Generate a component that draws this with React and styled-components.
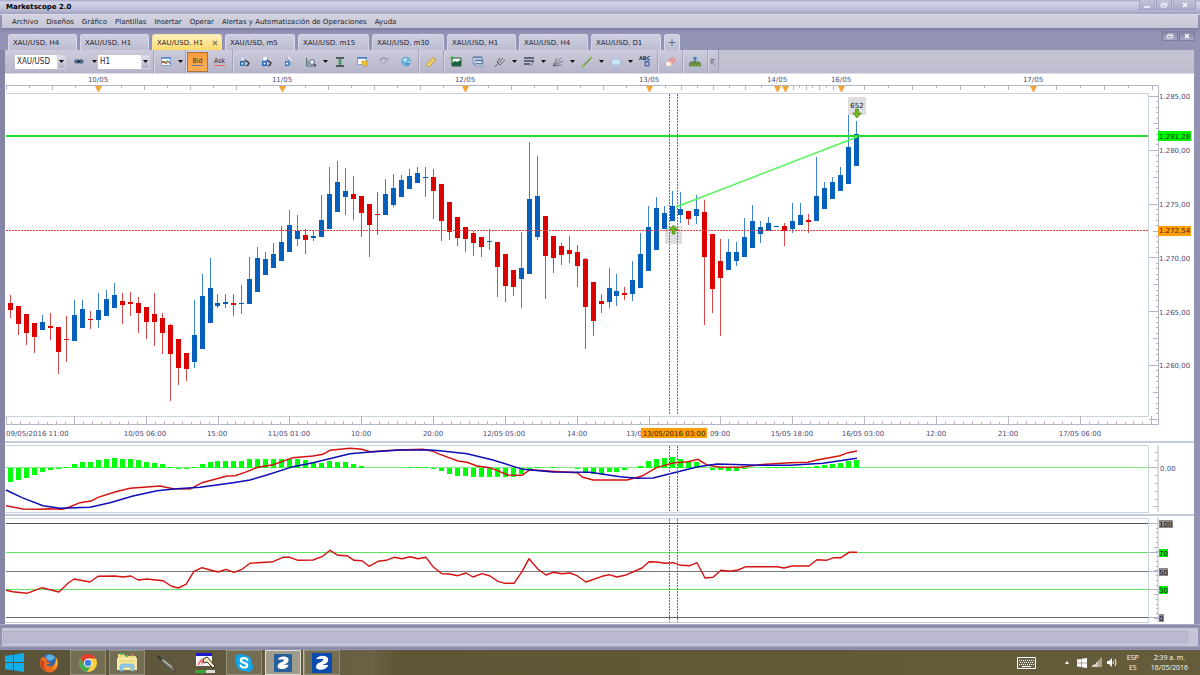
import React from 'react';
import styled, { createGlobalStyle, css } from 'styled-components';

const GlobalStyle = createGlobalStyle`
  * {
    box-sizing: border-box;
  }
  body {
    margin: 0;
    background: #5f573a;
    font-family: "DejaVu Sans", Verdana, sans-serif;
    font-size: 7px;
    color: #22222e;
  }
  button, select {
    font: inherit;
    color: inherit;
    margin: 0;
    padding: 0;
    border: 0;
    background: none;
  }
  svg {
    display: block;
  }
`;

/* ---------- window ---------- */

const Window = styled.div`
  background: #9293b3;
`;

const TitleBar = styled.header`
  display: flex;
  justify-content: space-between;
  align-items: flex-start;
  height: 15px;
  padding: 0 4px 0 6px;
  background: linear-gradient(#a3a5c6, #d2d4e8 2px, #c3c5dc 8px, #a4a5c4 13px);
  border-bottom: 1px solid #d9daea;
  h1 {
    margin: 0;
    font-size: 7px;
    line-height: 15px;
    font-weight: bold;
    color: #000;
  }
`;

const WindowButtons = styled.div`
  display: flex;
  gap: 1px;
`;

const WindowButton = styled.button`
  display: flex;
  align-items: center;
  justify-content: center;
  width: ${props => props.$wide ? 23 : 16}px;
  height: 10px;
  background: ${props => props.$dark ? 'linear-gradient(#7f80a2, #a8a9c4)' : 'linear-gradient(#c2c3da, #adaecb)'};
  border: 1px solid ${props => props.$dark ? '#7d7e9e' : '#a3a4c1'};
  border-top: 0;
`;

const MenuBar = styled.nav`
  display: flex;
  gap: 8px;
  height: 14px;
  margin: 0 2px;
  padding-left: 10px;
  background: linear-gradient(#d2d2e0, #c5c5d6);
  border-bottom: 1px solid #7f80a2;
  button {
    line-height: 14px;
    white-space: nowrap;
  }
`;

const TabStrip = styled.div`
  display: flex;
  align-items: flex-end;
  gap: 3px;
  height: 21px;
  padding: 0 5px 0 8px;
  background: linear-gradient(#8485a7, #9394b5 4px);
`;

const Tab = styled.button`
  display: flex;
  align-items: center;
  justify-content: space-between;
  width: ${props => props.$width || 69}px;
  height: 16px;
  padding: 0 3px 0 4px;
  border: 1px solid #d8d8e8;
  border-bottom: 0;
  border-radius: 3px 3px 0 0;
  background: linear-gradient(#cfcfe0, #bdbdd2);
  white-space: nowrap;
  ${props => props.$active && css`
    background: linear-gradient(#fff3c0, #ffd968);
    border-color: #f3e3a8;
  `}
`;

const AddTab = styled(Tab)`
  width: 16px;
  padding: 0;
  justify-content: center;
  color: #66667c;
  font-size: 10px;
`;

const ChildButtons = styled(WindowButtons)`
  margin-left: auto;
  align-self: flex-start;
  padding-top: 2px;
`;

/* ---------- toolbar ---------- */

const Workspace = styled.main`
  margin: 0 6px 0 0;
  border-left: 5px solid #8586a6;
  background: #fff;
`;

const Toolbar = styled.div`
  display: flex;
  align-items: center;
  height: 24px;
  border-bottom: 1px solid #dcdce8;
  background: linear-gradient(#c4c3d4, #bfbed0);
`;

const ToolGroup = styled.div`
  display: flex;
  align-items: center;
  height: 23px;
  padding: 0 2px 0 10px;
  background: linear-gradient(#cdccdc, #b5b4c9);
  border-right: 1px solid #a09fb5;
`;

const Combo = styled.label`
  display: flex;
  width: ${props => props.$width}px;
  height: 14px;
  background: #fff;
  margin-right: 2px;
  select {
    flex: 1;
    min-width: 0;
    appearance: none;
    padding-left: 2px;
    font-family: "DejaVu Sans Condensed", "DejaVu Sans", sans-serif;
    font-size: 8px;
    line-height: 14px;
    outline: none;
  }
`;

const ComboArrow = styled.span`
  display: flex;
  align-items: center;
  justify-content: center;
  width: 9px;
  background: linear-gradient(#e2e2ec, #aeaec2);
  border: 1px solid #d5d5e0;
`;

const ToolButton = styled.button`
  display: flex;
  align-items: center;
  justify-content: center;
  width: 22px;
  height: 20px;
  flex: none;
`;

const CaretButton = styled(ToolButton)`
  width: ${props => props.$wide ? 8 : 7}px;
`;

const PriceButton = styled(ToolButton)`
  flex-direction: column;
  width: ${props => props.$active ? 21 : 23}px;
  font-family: "DejaVu Sans Condensed", "DejaVu Sans", sans-serif;
  font-size: 7px;
  line-height: 8px;
  color: #3c2c38;
  span {
    border-bottom: 1px solid ${props => props.$active ? '#5f7fa8' : '#e06a62'};
  }
  ${props => props.$active && css`
    background: linear-gradient(#f79a3c, #ffae52);
    border: 1px solid #b0713c;
  `}
`;

const Separator = styled.i`
  width: 1px;
  height: 23px;
  margin: 0 1px;
  background: #a6a5bb;
  box-shadow: 1px 0 #d4d3e2;
`;

/* ---------- panels ---------- */

const Chart = styled.svg`
  width: 100%;
  font-family: "DejaVu Sans", Verdana, sans-serif;
  font-size: 7px;
`;

const Splitter = styled.div`
  height: 2px;
  background: #c2cddb;
`;

const WindowFoot = styled.div`
  height: 4px;
  background: linear-gradient(#b6b7cd, #8182a3 2px, #9a9bbb);
`;

const StatusBar = styled.footer`
  height: 18px;
  margin: 0 2px;
  padding: 3px 10px 3px 1px;
  background: #c6c5d8;
  div {
    height: 12px;
    background: #bbb9cf;
    border: 1px solid #b1b0c8;
  }
`;

/* ---------- taskbar ---------- */

const Taskbar = styled.div`
  display: flex;
  align-items: center;
  gap: 3px;
  height: 25px;
  background: linear-gradient(90deg, #5a5236, #625a3f 20%, #6b6144 31%, #5e5636 33%, #615838 60%, #645c3b);
`;

const TaskButton = styled.button`
  display: flex;
  align-items: center;
  justify-content: center;
  width: ${props => props.$start ? 28 : 36}px;
  height: 25px;
  flex: none;
  ${props => props.$open && css`
    background: #736d53;
    border: 1px solid #928d75;
  `}
  ${props => props.$active && css`
    background: #a09c8c;
    border: 1px solid #dedcd2;
    box-shadow: 2px 0 #5f583c, 3px 0 #c1bdab;
  `}
`;

const Tray = styled.div`
  display: flex;
  align-items: center;
  margin-left: auto;
  padding-right: 12px;
  color: #fff;
  font-family: "Open Sans", "Noto Sans", sans-serif;
  font-size: 7px;
  line-height: 10px;
  text-align: center;
`;

const TrayButton = styled.button`
  display: flex;
  justify-content: center;
  width: ${props => props.$gap ? 19 : 15}px;
  margin-right: ${props => props.$gap || 0}px;
`;

const Language = styled.div`
  width: 26px;
  margin-right: 5px;
`;

/* ---------- icons ---------- */

const Caret = () => (
  <svg width="5" height="3" viewBox="0 0 5 3"><path d="M0 0h5L2.5 3z" fill="#111" /></svg>
);

const icons = {
  link: <g fill="#7b9cbd" stroke="#2c4a6c" strokeWidth="1.2"><rect x="3" y="5" width="4" height="3" rx="1.5" /><rect x="7" y="5" width="4" height="3" rx="1.5" /><path d="M5 6.500h4" stroke="#1c3049" /></g>,
  chart: <g><path d="M2.500 2.500h9v8h-9z" fill="#fff" stroke="#7ea3d0" /><path d="M2 3h10" stroke="#4c83c9" strokeWidth="1.500" /><path d="M3 8l2-2 2 3 2-3 2 3" fill="none" stroke="#d43a3a" /><path d="M3 6l2 2 3-2 3 1" fill="none" stroke="#3d8b4c" /></g>,
  zoomIn: <g><circle cx="4.500" cy="3.500" r="1.700" fill="#dbe7f2" stroke="#a5b5c8" strokeWidth=".5" /><path d="M2 6h5v5H2z" fill="#3b6ea8" /><path d="M3.500 7.500h2v2h-2z" fill="#cfe0f2" /><path d="M7 5l4 3-1 2-2 1" fill="none" stroke="#30303c" strokeWidth="1.300" /></g>,
  zoomOut: <g><circle cx="5" cy="3.500" r="2.200" fill="#f4f8fc" stroke="#a5b5c8" strokeWidth=".5" /><path d="M2 6h5v5H2z" fill="#2468b2" /><path d="M3.500 7.500h2v2h-2z" fill="#e7f1fb" /><path d="M7 5l4 3-1 2-2 1" fill="none" stroke="#30303c" strokeWidth="1.300" /></g>,
  pointer: <g><path d="M3 6h4v5H3z" fill="#377bbb" /><path d="M4 7.500h2v2H4z" fill="#e7f1fb" /><path d="M5 3l2 3M10 4L8 9M8 3v8" stroke="#8195ad" /><path d="M6 2l4 4" stroke="#f1f5fb" strokeWidth="1.500" /></g>,
  zoomArea: <g fill="none"><path d="M2.500 3v8H12" stroke="#54776c" /><path d="M2 9h3M4 5v5" stroke="#6d8f84" /><circle cx="8" cy="7" r="2.500" fill="#dce9f0" stroke="#676d80" /><path d="M10 9l2 2" stroke="#444" strokeWidth="1.500" /></g>,
  fit: <g><path d="M3 3h8M3 11h8" stroke="#2c3833" strokeWidth="1.300" /><path d="M7 4v6" stroke="#3b7a4f" strokeWidth="1.500" /><path d="M4.500 6.500L7 4l2.500 2.500zM4.500 8h5L7 10z" fill="#4f9a66" /></g>,
  note: <g><path d="M2.500 2.500h9v7h-9z" fill="#fff" stroke="#7ea3d0" /><path d="M2 3h10" stroke="#3f78bd" strokeWidth="1.500" /><path d="M7 6h5v5H9L7 9z" fill="#f5ca35" stroke="#ba8322" strokeWidth=".6" /></g>,
  refresh: <g fill="none"><path d="M3 6c1-4 6-4 7-1" stroke="#8d92a4" strokeWidth="1.300" /><path d="M11 2v4H7M9 7c-1 3-4 3-5 0" stroke="#a4a8b8" /></g>,
  globe: <g><circle cx="7" cy="6.500" r="4.500" fill="#67b3e0" stroke="#6c9dc2" strokeWidth=".6" /><path d="M4 5l3-2 1 2-2 2zM8 8l3-2-1 3z" fill="#c9ecfb" /><path d="M7 8h4l-2 3z" fill="#3b89bb" /></g>,
  ruler: <g><path d="M2 9.500L9 2l3 3-7 7z" fill="#f4d976" stroke="#b28f38" strokeWidth=".8" /><path d="M5 7.500l1.500 1.500M7 5.500l1.500 1.500M9 3.500l1.500 1.500" stroke="#8b6d2c" strokeWidth=".7" /></g>,
  picture: <g><path d="M3 3h9v8H3z" fill="#e9f5e6" stroke="#1f5c35" /><path d="M3 8l3-2 2 1 4-2v6H3z" fill="#1f6140" /><path d="M1 3h4M3 1v4" stroke="#3fa444" /></g>,
  windows: <g fill="#e9f1fa" stroke="#5c7ca8" strokeWidth=".8"><path d="M2 2h9v7H2zM4 5h8v6H4z" /><path d="M2 2.500h9M4 5.500h8" strokeWidth="1.400" /><path d="M5 9l2-1 2 1 2-1" fill="none" stroke="#344c6d" /></g>,
  fork: <g fill="none" stroke="#55555f" strokeWidth=".9"><path d="M2 12L10 3M4 7l3-4M7 10l5-5M4 7l3 3" /></g>,
  lines: <g fill="none" stroke="#3d4a5c" strokeWidth="1.300"><path d="M2 3h10M2 6h10M2 9h6" /><path d="M9 11l2-4" stroke="#777" strokeWidth="1" /></g>,
  fan: <g fill="none" stroke="#6a6a78" strokeWidth=".9"><path d="M2 11L6 3M2 11l8-8M2 11l10-5M2 11l9-1" /></g>,
  line: <g><path d="M3 11l8-8" stroke="#5d9c33" strokeWidth="1.300" /><circle cx="3" cy="11" r="1.200" fill="#8fba3f" /><circle cx="11" cy="3" r="1.200" fill="#8fba3f" /></g>,
  ellipse: <ellipse cx="7" cy="7" rx="5" ry="3.500" fill="#c9e2f5" stroke="#9dbfe0" />,
  label: <g><text x="1" y="5" fontSize="5" fontWeight="bold" fill="#30303e">ABC</text><path d="M7 6h4v5H7z" fill="#6482bc" stroke="#465f9a" strokeWidth=".8" /><path d="M9 8v2" stroke="#fff" /></g>,
  eraser: <g><path d="M3 8l5-5c2-1 5 1 4 3l-5 5c-2 1-5-1-4-3z" fill="#ee9c9e" stroke="#c08088" strokeWidth=".6" /><path d="M3 8l2-2 4 3-2 2c-2 1-5-1-4-3z" fill="#fff1ec" /></g>,
  tree: <g><path d="M7 4v4M3 9V7h8v2" fill="none" stroke="#366c36" /><path d="M5.500 2h3v3h-3z" fill="#3d7fba" /><path d="M1.500 8h3v3h-3zM5.500 8h3v3h-3zM9.500 8h3v3h-3z" fill="#7ba832" stroke="#436e1e" strokeWidth=".6" /></g>,
};

const Icon = ({ name }) => <svg width="14" height="14" viewBox="0 0 14 14">{icons[name]}</svg>;

const Tool = ({ name, menu, wide }) => (
  <>
    <ToolButton aria-label={name}><Icon name={name} /></ToolButton>
    {menu && <CaretButton $wide={wide} aria-label={name + ' menu'}><Caret /></CaretButton>}
  </>
);

const CloseMark = ({ color = '#fff' }) => (
  <svg width="6" height="6" viewBox="0 0 6 6"><path d="M1 1l4 4M5 1L1 5" stroke={color} strokeWidth="1.300" /></svg>
);

const RestoreMark = () => (
  <svg width="8" height="6" viewBox="0 0 8 6"><path d="M2 2V1h5v3H6" fill="none" stroke="#f0f0f8" strokeWidth=".8" /><path d="M1 2.500h5V5H1z" fill="none" stroke="#fff" strokeWidth=".9" /></svg>
);

/* ---------- chart data ---------- */

const STEP = 7.98;
const barX = i => Math.floor(10.5 + STEP * i);

// colour, high, body top, body bottom, low
const candles = `
r 295 303 310 318|r 306 306 324 335|r 314 314 333 345|r 323 323 337 353|b 315 322 330 330|r 313 326 328 340
r 327 327 352 374|r 316 339 340 362|b 300 315 341 341|b 300 309 328 328|r 311 319 320 329|b 293 310 320 328
b 290 299 316 316|b 283 295 308 308|r 293 301 305 324|r 292 302 304 316|r 297 303 313 333|r 307 307 322 339
r 293 314 322 346|r 313 318 333 354|r 324 325 354 401|r 339 339 368 385|r 353 353 369 381|b 300 335 362 368
b 274 296 349 349|b 258 288 323 323|b 294 303 306 308|b 294 302 304 308|r 294 303 305 316|b 285 303 304 314
b 257 279 304 304|b 247 258 292 292|b 252 259 275 275|b 243 254 268 268|b 226 242 261 261|b 210 225 252 252
b 215 231 239 246|r 229 235 240 254|b 231 236 238 241|b 195 220 237 237|b 167 194 229 229|b 161 182 212 212
b 168 191 197 215|r 176 194 199 220|r 196 196 213 237|r 204 204 225 257|r 192 214 215 235|b 179 194 215 215
b 174 188 205 207|b 175 180 197 197|b 169 176 189 189|b 167 173 183 183|b 167 177 178 197|r 169 177 191 219
r 184 184 221 241|r 202 202 232 240|r 217 217 238 246|r 227 227 239 252|r 231 233 243 256|r 237 237 247 257
b 229 241 242 250|r 242 242 267 297|r 254 254 286 302|r 270 270 287 296|b 232 268 279 308|b 142 199 274 274
b 156 196 237 240|r 216 216 256 299|r 236 236 258 273|r 243 246 255 265|r 236 250 254 263|r 245 252 266 287
r 258 259 307 349|r 282 282 321 336|r 294 301 304 313|b 268 288 302 308|b 274 291 296 306|r 287 293 295 300
b 261 280 294 301|b 233 254 288 288|b 206 227 271 271|b 197 208 250 250|b 206 213 229 229|b 191 206 221 221
b 192 209 215 223|r 211 211 219 225|b 195 209 216 224|r 200 212 257 325|r 234 234 289 313|r 239 261 278 336
b 239 252 270 270|b 242 252 261 266|b 218 237 257 257|b 205 221 248 248|b 221 227 234 243|b 217 223 231 231
b 226 226 227 227|r 223 226 231 246|b 203 221 229 233|b 203 215 225 225|r 214 220 222 233|b 157 196 221 221
b 182 188 209 209|b 177 182 199 199|b 167 175 191 191|b 115 147 184 184|b 121 134 166 166`
  .trim().split(/[|\n]/).map(row => {
    const [color, ...values] = row.split(' ');
    return [color, ...values.map(Number)];
  });

const histogram = [
  -14, -12, -10, -7, -4, -2, -1, 1, 4, 6, 6, 8, 9, 10, 9, 9, 8, 6, 5, 4, 1, -1, -1, 1, 4, 6, 7, 7, 7, 7,
  9, 9, 9, 9, 9, 9, 9, 8, 6, 5, 7, 6, 6, 4, 2, 0, 0, 0, 0, 0, 1, 1, 1, -1, -3, -6, -8, -8, -9, -9, -9, -9,
  -9, -9, -6, -1, 1, 0, 1, 0, 0, -1, -4, -6, -6, -4, -4, -2, 0, 2, 7, 9, 10, 11, 9, 7, 6, 0, -2, -2, -3,
  -3, -1, 0, 0, 1, 1, 1, 1, 1, 1, 2, 3, 4, 5, 7, 8,
];

const macdLine = '6,505.7 23,509 40,509.3 48,508.7 62,509.3 67,508 80,502.7 91,501 98,497.3 115,492 130,488.3 160,486 173,488.7 190,489 202,482.7 227,476 235,475.7 245,472.3 258,467.3 273,464.7 293,457.7 313,456 323,454.3 330,450.3 350,448.3 362,449.3 370,451.7 397,450 423,449.3 433,451.3 440,454.3 458,461 467,462.3 477,466 490,467.7 508,475 522,475.3 530,469.7 553,471.3 577,472.7 583,477.3 593,480 627,480 642,476 657,467.3 673,463 688,461.7 698,459.3 707,465 720,467.3 740,467.3 760,464.7 790,462.7 808,462.3 817,460 840,455.7 848,452.7 857,451';
const signalLine = '6,490 22,497.7 43,505.7 60,508.3 90,507.3 110,502.7 133,496 157,490.7 177,488.7 200,487.3 233,482.7 250,480 267,475 293,466.7 313,462.7 350,453.7 370,452 400,450 430,450 440,450.7 467,453.7 493,460 523,469.3 553,472 590,472.3 620,476.7 637,478.3 653,478 673,473 698,466.7 717,464 760,465.3 790,465.3 823,463.3 857,458.3';
const rsiLine = '6,590.3 13,591.7 27,593.3 42,587.7 59,592 68,583.3 74,579 90,582 98,576.3 115,576 123,577 131,576 138,580 147,579 163,580.7 171,586 178,588 186,584.3 194,571.3 202,567.7 218,572 226,569.3 234,572.3 242,569.3 250,563.3 273,561.7 283,557.3 290,557.3 298,560.3 313,560 322,556.7 330,550.3 338,555.3 347,555.7 354,560.3 362,560.7 369,566.3 378,561.3 386,560.3 394,557.3 402,558.7 410,556.7 418,558.7 426,557.3 433,566.7 442,573.7 449,574 458,575.7 466,573 473,577 482,573.7 490,576 498,581.3 505,583.3 514,583.3 522,571.7 529,558.7 538,569.3 546,575 553,572.3 562,573.7 570,573 577,575.7 586,582 602,576.3 609,574.7 617,577 625,575.3 642,568 649,561.7 657,562 665,563.3 673,562.7 681,565.3 690,565.7 697,562.7 705,578 713,577.3 721,570.3 730,571.3 738,570 746,566.7 777,566.7 784,568 792,566 809,566 817,559.7 826,560.3 834,557.7 841,557.7 849,552.3 857,552.3';

const days = [[98, '10/05'], [282, '11/05'], [465, '12/05'], [649, '13/05'], [777, '14/05'], [785], [841, '16/05'], [1033, '17/05']];
const dayTicks = [
  6, 29, 52, 75, 98, 121, 144, 167, 190, 213, 236, 259, 282, 305, 328, 351, 374, 397, 420, 443, 465, 488, 511, 534, 557,
  580, 603, 626, 649, 665, 681, 697, 713, 729, 745, 761, 777, 785, 793, 799, 806, 812, 819, 826, 833, 841, 864, 888, 912,
  936, 960, 984, 1008, 1033, 1056, 1080, 1104, 1128, 1152,
];
const hours = [
  [145, '10/05 06:00'], [217, '15:00'], [289, '11/05 01:00'], [361, '10:00'], [433, '20:00'], [504, '12/05 05:00'],
  [577, '14:00'], [634, '13/0'], [720, '09:00'], [792, '15/05 18:00'], [863, '16/05 03:00'], [936, '12:00'],
  [1008, '21:00'], [1080, '17/05 06:00'],
];
const prices = [[97, '1.285,00'], [151, '1.280,00'], [205, '1.275,00'], [259, '1.270,00'], [313, '1.265,00'], [366, '1.260,00']];
const levels = [
  [523, '#555', '100', 14, '#8c8c8c'],
  [552, '#5de65d', '70', 9, '#00f000'],
  [571, '#777', '50', 9, '#8c8c8c'],
  [589, '#5de65d', '30', 9, '#00f000'],
  [617, '#666', '0', 5, '#8c8c8c'],
];

const AXIS = '#b3b6c6';
const LABEL = '#4b4b78';
const fill = { r: '#dd0000', b: '#0560bd' };
const wick = { r: '#d84a4a', b: '#3c84cb' };
const range = n => Array.from({ length: n }, (_, i) => i);

const Dashes = styled.path`
  fill: none;
  stroke: #ee3a3a;
  stroke-dasharray: 2 1;
`;

// the two dashed lines that mark the selected bar in every panel
const Cursor = ({ from, to }) => <Dashes d={`M669.500 ${from}V${to}M677.500 ${from}V${to}`} />;

const Frame = ({ top, bottom }) => (
  <path d={`M6 ${top}.5H1148.500V${bottom}.5H6`} fill="none" stroke="#c9d2e0" />
);

const PriceChart = () => (
  <Chart viewBox="5 74 1189 367" role="img" aria-label="XAU/USD H1">
    <path d="M6 85.500H1158.500V424.500H6M6.500 416v8" fill="none" stroke={AXIS} />
    <Frame top={93} bottom={416} />
    <path d={dayTicks.map((x, i) => `M${x}.5 86v${i % 2 ? 2 : 4}`).join('')} stroke={AXIS} />
    {days.map(([x, label]) => (
      <g key={x}>
        <path d={`M${x - 3} 86h7l-3 6h-1z`} fill="#f2a533" />
        <text x={x} y="82" textAnchor="middle" fill={LABEL}>{label}</text>
      </g>
    ))}
    <path d={range(128).map(n => {
      const i = n + 1;
      const x = Math.floor(2.5 + i * 8.98);
      return i % 8 === 0 ? `M${x}.5 416v8` : `M${x}.5 424v-${i % 2 ? 2 : 3}`;
    }).join('')} stroke={AXIS} />
    <path d={range(61).map(i => {
      const y = Math.round(96 + i * 5.38);
      return `M1158 ${y}.5h-${i % 10 === 0 ? 9 : i % 5 === 0 ? 5 : 2}`;
    }).join('')} stroke={AXIS} />
    {prices.map(([y, label]) => <text key={y} x="1159" y={y + 2} fill={LABEL}>{label}</text>)}

    <text x="6" y="436" fill={LABEL}>09/05/2016 11:00</text>
    {hours.map(([x, label]) => <text key={x} x={x} y="436" textAnchor="middle" fill={LABEL}>{label}</text>)}
    <rect x="641" y="428" width="66" height="10" fill="#ff9d0a" />
    <text x="674" y="436" textAnchor="middle" fill="#3a2500">13/05/2016 03:00</text>

    <rect x="848" y="97" width="18" height="18" fill="#dddde2" />
    <rect x="665" y="226" width="17" height="18" fill="#dddde2" />
    {candles.map(([color, high, top, bottom, low], i) => (
      <g key={i}>
        <rect x={barX(i)} y={high} width="1" height={low - high} fill={wick[color]} />
        <rect x={barX(i) - 2} y={top} width="5" height={bottom - top} fill={fill[color]} />
      </g>
    ))}
    <path d="M6 136H1148" stroke="#25dc35" strokeWidth="2" />
    <Dashes d="M6 230.500H1148" />
    <Cursor from={94} to={414} />
    <path d="M676 207L857 137" stroke="#50f555" strokeWidth="1.500" />
    <text x="857" y="108" textAnchor="middle" fill="#111">652</text>
    <path d="M855.500 109h3v4h3l-4.500 5-4.500-5h3z" fill="#72b51c" stroke="#3f8213" strokeWidth=".6" />
    <path d="M672 234h3v-4h3l-4.500-5-4.500 5h3z" fill="#72b51c" stroke="#3f8213" strokeWidth=".6" />

    <rect x="1158" y="131" width="33" height="10" fill="#00f400" />
    <text x="1159" y="139" fill="#063d06">1.281,28</text>
    <rect x="1158" y="226" width="33" height="10" fill="#ff9d0a" />
    <text x="1159" y="233" fill="#3a2500">1.272,54</text>
  </Chart>
);

const MacdChart = () => (
  <Chart viewBox="5 443 1189 71" role="img" aria-label="MACD">
    <Frame top={445} bottom={512} />
    <path d="M6 467.500H1148" stroke="#7fec7f" />
    <path d="M1158 445V512M1149 467.500h9M1158 452.500h-3M1158 460.500h-3M1158 475.500h-3M1158 483.500h-3M1158 491.500h-3M1158 499.500h-3M1158 506.500h-5" stroke={AXIS} />
    {histogram.map((value, i) => value !== 0 && (
      <rect key={i} x={barX(i) - 2} y={value > 0 ? 468 - value : 468} width="5" height={Math.abs(value)} fill="#00ff0a" />
    ))}
    <polyline points={macdLine} fill="none" stroke="#d41212" strokeWidth="1.400" />
    <polyline points={signalLine} fill="none" stroke="#0c0cb8" strokeWidth="1.400" />
    <Cursor from={446} to={512} />
    <text x="1160" y="471" fill={LABEL}>0,00</text>
  </Chart>
);

const RsiChart = () => (
  <Chart viewBox="5 516 1189 108" role="img" aria-label="RSI">
    <Frame top={518} bottom={622} />
    <path d="M1158 518V622" stroke={AXIS} />
    <path d={range(21).map(i => {
      const y = Math.round(523 + i * 4.74);
      return `M1158 ${y}.5h-${i % 5 === 0 ? 4 : 2}`;
    }).join('')} stroke={AXIS} />
    {levels.map(([y, color, label, width, background]) => (
      <g key={y}>
        <path d={`M6 ${y}.5H1148`} stroke={color} />
        <path d={`M1149 ${y}.5h9`} stroke={AXIS} />
        <rect x="1159" y={y - 3} width={width} height="8" fill={background} />
        <text x="1159" y={y + 4} fill="#111">{label}</text>
      </g>
    ))}
    <polyline points={rsiLine} fill="none" stroke="#d41212" strokeWidth="1.400" strokeLinejoin="round" />
    <Cursor from={519} to={622} />
  </Chart>
);

/* ---------- taskbar pictures ---------- */

const WindowsLogo = ({ size, color }) => (
  <svg width={size} height={size} viewBox="0 0 20 20">
    <path d="M0 3l8.500-1.200V9.500H0zM9.500 1.600L20 0v9.500H9.500zM0 10.500h8.500v7.700L0 17zM9.500 10.500H20V20L9.500 18.400z" fill={color} />
  </svg>
);

const Firefox = () => (
  <svg width="20" height="20" viewBox="0 0 20 20">
    <circle cx="10" cy="10" r="9" fill="#2a65ad" />
    <path d="M7 3c4-3 8-1 9 2l-4 3-4-1z" fill="#58b2e4" />
    <path d="M3 4c-4 5-2 13 5 15s12-4 11-10c0-3-2-5-3-6 1 3 1 6-1 8-2 3-6 3-8 0 2 1 4 0 5-1-2 0-3-2-5-2 0-1 2-1 2-2-2 0-3-2-4-2z" fill="#ec6a1c" />
    <path d="M17 5c3 6 0 11-5 12 4-2 5-6 5-12z" fill="#ffc63c" />
    <path d="M2 7c-1 5 1 9 5 11-2-3-3-6-2-9z" fill="#c93b20" />
  </svg>
);

const Chrome = () => (
  <svg width="18" height="18" viewBox="0 0 18 18">
    <circle cx="9" cy="9" r="9" fill="#ffd03f" />
    <path d="M1.200 4.500A9 9 0 0116.800 4.500H9L5 11z" fill="#e2402f" />
    <path d="M1.200 4.500A9 9 0 008 18l4.500-7H5z" fill="#4aa853" />
    <circle cx="9" cy="9" r="4.300" fill="#fff" />
    <circle cx="9" cy="9" r="3.300" fill="#3d7fe8" />
  </svg>
);

const Explorer = () => (
  <svg width="20" height="19" viewBox="0 0 20 19">
    <path d="M1 1h6l1 2h11v14H1z" fill="#f2dc82" />
    <path d="M3 1h3M9 3h2" stroke="#5fb05b" strokeWidth="2" />
    <path d="M14 2h3" stroke="#cf7b47" strokeWidth="2" />
    <path d="M0 5h20v12H0z" fill="#f8e9a4" />
    <path d="M2 8h16" stroke="#e6c763" />
    <path d="M3 18v-5q0-2 2-2h10q2 0 2 2v5h-3v-4H6v4z" fill="#8fcbe9" stroke="#6aa7c9" strokeWidth=".6" />
  </svg>
);

const Pen = () => (
  <svg width="22" height="20" viewBox="0 0 22 20">
    <path d="M4 4l4 2 10 8 3 5-5-2L6 8z" fill="#7d7e76" stroke="#40413a" strokeWidth=".8" />
    <path d="M2 2l3 1 2 5-4-3z" fill="#33352e" />
    <path d="M8 7l9 7" stroke="#bbbcb2" strokeWidth="1.500" />
    <circle cx="18" cy="16" r=".8" fill="#d94d3c" />
  </svg>
);

const Editor = () => (
  <svg width="21" height="20" viewBox="0 0 21 20">
    <path d="M1 0h16v13H1z" fill="#f4f2fa" />
    <path d="M1 0h16v3H1z" fill="#1b1bd0" />
    <path d="M3 12l3-5 1 3 2-5" fill="none" stroke="#e8756f" strokeWidth="1.500" />
    <path d="M8 6l4-2 2 2 6 7-2 2-6-6-3 1z" fill="#f4e6bc" stroke="#222" strokeWidth=".9" />
    <path d="M0 17h11v3H0z" fill="#37a63b" />
    <path d="M11 17h9v3h-9z" fill="#dcdcdc" />
  </svg>
);

const Skype = () => (
  <svg width="20" height="20" viewBox="0 0 20 20">
    <circle cx="10" cy="10" r="8" fill="#12a5e8" />
    <circle cx="6" cy="6" r="5" fill="#12a5e8" />
    <circle cx="14" cy="14" r="5" fill="#12a5e8" />
    <path d="M13.500 7C12 4.500 7 4.500 6.800 7.300c0 3.200 6.500 2 6.500 5C13 15 8 15.300 6.500 12.600" fill="none" stroke="#fff" strokeWidth="2.200" strokeLinecap="round" />
  </svg>
);

const Station = ({ size, color }) => (
  <svg width={size} height={size} viewBox="0 0 20 20">
    <rect width="20" height="20" rx="1" fill={color} />
    <path d="M4 6c3-4 9-4 12-1 1 4-2 6-6 7h6v1c-2 4-9 5-12 2 0-4 2-5 5-6 1-1 3-2 2-3H4z" fill="#fff" />
  </svg>
);

const Keyboard = () => (
  <svg width="19" height="12" viewBox="0 0 19 12">
    <path d="M.5.5h18v11H.5z" fill="#6b6450" stroke="#fff" />
    <path d="M2 3.500h15M2 7.500h15" stroke="#fff" strokeDasharray="1 1" />
    <path d="M3 5.500h14" stroke="#fff" strokeDasharray="1 1" />
    <path d="M5 9.500h9" stroke="#fff" />
  </svg>
);

const tabs = [
  ['XAU/USD, H4'], ['XAU/USD, H1'], ['XAU/USD, H1', 70, true], ['XAU/USD, m5', 70], ['XAU/USD, m15', 71],
  ['XAU/USD, m30', 72], ['XAU/USD, H1'], ['XAU/USD, H4'], ['XAU/USD, D1', 70],
];
const menus = ['Archivo', 'Diseños', 'Gráfico', 'Plantillas', 'Insertar', 'Operar', 'Alertas y Automatización de Operaciones', 'Ayuda'];

const App = () => {
  return (
    <>
      <GlobalStyle />
      <Window>
        <TitleBar>
          <h1>Marketscope 2.0</h1>
          <WindowButtons>
            <WindowButton aria-label="Minimizar">
              <svg width="6" height="6" viewBox="0 0 6 6"><path d="M0 5h6" stroke="#fff" strokeWidth="1.400" /></svg>
            </WindowButton>
            <WindowButton aria-label="Restaurar"><RestoreMark /></WindowButton>
            <WindowButton $wide aria-label="Cerrar"><CloseMark /></WindowButton>
          </WindowButtons>
        </TitleBar>
        <MenuBar>
          {menus.map(label => <button key={label}>{label}</button>)}
        </MenuBar>
        <TabStrip>
          {tabs.map(([label, width, active], i) => (
            <Tab key={i} $width={width} $active={active}>
              {label}
              {active && <CloseMark color="#85805e" />}
            </Tab>
          ))}
          <AddTab>+</AddTab>
          <ChildButtons>
            <WindowButton $dark aria-label="Restaurar gráfico"><RestoreMark /></WindowButton>
            <WindowButton $dark aria-label="Cerrar gráfico"><CloseMark /></WindowButton>
          </ChildButtons>
        </TabStrip>

        <Workspace>
          <Toolbar>
            <ToolGroup>
              <Combo $width={51}>
                <select aria-label="Instrumento"><option>XAU/USD</option></select>
                <ComboArrow><Caret /></ComboArrow>
              </Combo>
              <Tool name="link" menu wide />
              <Combo $width={52}>
                <select aria-label="Periodo"><option>H1</option></select>
                <ComboArrow><Caret /></ComboArrow>
              </Combo>
              <Separator />
              <Tool name="chart" menu />
              <Separator />
              <PriceButton $active><span>Bid</span></PriceButton>
              <PriceButton><span>Ask</span></PriceButton>
              <Separator />
              <Tool name="zoomIn" />
              <Tool name="zoomOut" />
              <Tool name="pointer" />
              <Tool name="zoomArea" menu />
              <Tool name="fit" />
              <Tool name="note" />
              <Tool name="refresh" />
              <Tool name="globe" />
              <Separator />
              <Tool name="ruler" />
              <Separator />
              <Tool name="picture" />
              <Tool name="windows" />
              <Tool name="fork" menu />
              <Tool name="lines" menu />
              <Tool name="fan" menu />
              <Tool name="line" menu />
              <Tool name="ellipse" menu />
              <Tool name="label" />
              <Separator />
              <Tool name="eraser" />
              <Separator />
              <Tool name="tree" />
              <Separator />
              <CaretButton aria-label="Más botones">
                <svg width="5" height="6" viewBox="0 0 5 6"><path d="M0 .5h5M1 2v3M1 2l4 4M1 2h3" stroke="#77778f" fill="none" /></svg>
              </CaretButton>
            </ToolGroup>
          </Toolbar>
          <PriceChart />
          <Splitter />
          <MacdChart />
          <Splitter />
          <RsiChart />
        </Workspace>
        <WindowFoot />
        <StatusBar><div /></StatusBar>
        <WindowFoot />
      </Window>

      <Taskbar>
        <TaskButton $start aria-label="Inicio"><WindowsLogo size={19} color="#11aee8" /></TaskButton>
        <TaskButton aria-label="Firefox"><Firefox /></TaskButton>
        <TaskButton $open aria-label="Chrome"><Chrome /></TaskButton>
        <TaskButton $open aria-label="Explorador"><Explorer /></TaskButton>
        <TaskButton aria-label="Lápiz"><Pen /></TaskButton>
        <TaskButton aria-label="Editor"><Editor /></TaskButton>
        <TaskButton $open aria-label="Skype"><Skype /></TaskButton>
        <TaskButton $active aria-label="Marketscope"><Station size={18} color="#275f9c" /></TaskButton>
        <TaskButton $open aria-label="Trading Station"><Station size={20} color="#0a4bb0" /></TaskButton>
        <Tray>
          <TrayButton $gap={24} aria-label="Teclado"><Keyboard /></TrayButton>
          <TrayButton aria-label="Iconos ocultos">
            <svg width="4" height="3" viewBox="0 0 4 3"><path d="M0 3h4L2 0z" fill="#fff" /></svg>
          </TrayButton>
          <TrayButton aria-label="Windows"><WindowsLogo size={10} color="#fff" /></TrayButton>
          <TrayButton aria-label="Red">
            <svg width="10" height="9" viewBox="0 0 10 9"><path d="M1 9V7M3 9V6M5 9V4" stroke="#fff" strokeWidth="1.400" /><path d="M7 9V2M9 9V0" stroke="#c9c5b5" strokeWidth="1.400" /></svg>
          </TrayButton>
          <TrayButton aria-label="Volumen">
            <svg width="10" height="9" viewBox="0 0 10 9"><path d="M0 3h2l3-3v9L2 6H0z" fill="#fff" /><path d="M6 3q1 1.500 0 3M8 1q2 3.500 0 7" fill="none" stroke="#fff" /></svg>
          </TrayButton>
          <Language>ESP<br />ES</Language>
          <time>2:39 a. m.<br />16/05/2016</time>
        </Tray>
      </Taskbar>
    </>
  );
};

export default App;
